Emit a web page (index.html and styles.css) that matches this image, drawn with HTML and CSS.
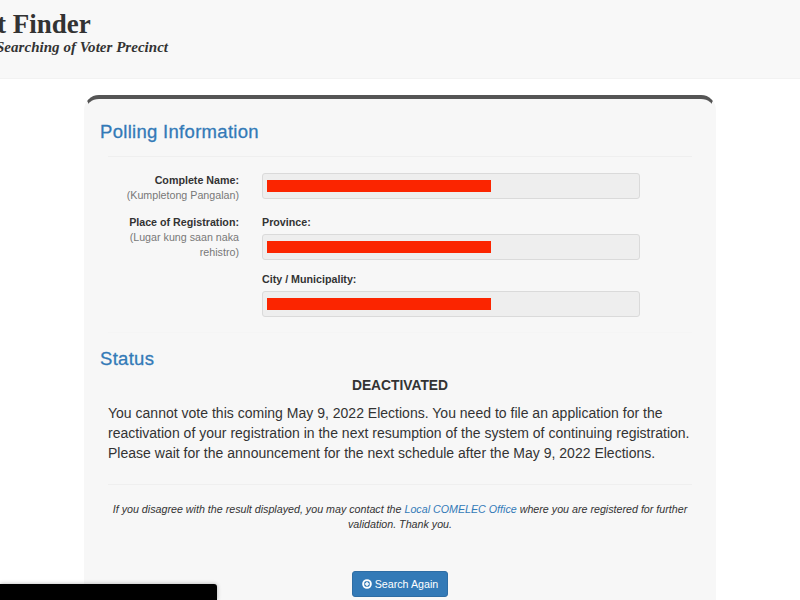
FILE: index.html
```html
<!DOCTYPE html>
<html lang="en">
<head>
    <meta charset="UTF-8">
    <meta name="viewport" content="width=device-width, initial-scale=1.0">
    <title>Precinct Finder</title>
    <link rel="stylesheet" href="styles.css">
</head>
<body>
    <header>
        <h1>t Finder</h1>
        <p class="tagline">Searching of Voter Precinct</p>
    </header>

    <div class="panel">
        <h2>Polling Information</h2>
        <hr>
        <div class="form-row">
            <div class="form-label">
                <b>Complete Name:</b>
                <span>(Kumpletong Pangalan)</span>
            </div>
            <div class="form-fields">
                <div class="field"><div class="redacted"></div></div>
            </div>
        </div>
        <div class="form-row">
            <div class="form-label">
                <b>Place of Registration:</b>
                <span>(Lugar kung saan naka rehistro)</span>
            </div>
            <div class="form-fields">
                <b>Province:</b>
                <div class="field"><div class="redacted"></div></div>
                <b>City / Municipality:</b>
                <div class="field"><div class="redacted"></div></div>
            </div>
        </div>
        <hr class="faint">

        <h2>Status</h2>
        <div class="status"><span>DEACTIVATED</span></div>
        <p class="message">
            <span>You cannot vote this coming May 9, 2022 Elections. You need to file an application for the</span><br>
            <span>reactivation of your registration in the next resumption of the system of continuing registration.</span><br>
            <span>Please wait for the announcement for the next schedule after the May 9, 2022 Elections.</span>
        </p>
        <hr>
        <p class="note">
            <span>If you disagree with the result displayed, you may contact the <a href="#">Local COMELEC Office</a> where you are registered for further</span><br>
            <span>validation. Thank you.</span>
        </p>
        <div class="actions">
            <a href="#" class="btn">
                <svg class="icon" viewBox="0 0 16 16">
                    <circle cx="8" cy="8" r="6.2" fill="none" stroke="#fff" stroke-width="3"/>
                    <path d="M8 4.5v7M4.5 8h7" stroke="#fff" stroke-width="2.4"/>
                </svg>
                <span>Search Again</span>
            </a>
        </div>
    </div>

    <div class="status-bar"></div>
</body>
</html>
```

FILE: styles.css
```css
* {
    box-sizing: border-box;
}
body {
    font-family: "Liberation Sans", Arial, sans-serif;
    margin: 0;
    background-color: #fff;
    color: #333;
    font-size: 10.7px;
    line-height: 15px;
}
header {
    height: 79px;
    padding-top: 9px;
    background-color: #f8f8f8;
    border-bottom: 1px solid #f2f2f2;
    font-family: "Liberation Serif", "Times New Roman", serif;
    white-space: nowrap;
}
h1 {
    margin: 0 0 0 -3px;
    font-size: 27px;
    line-height: 30px;
}
.tagline {
    margin: 0 0 0 -4px;
    font-size: 15px;
    line-height: 17px;
    letter-spacing: 0.03px;
    font-weight: bold;
    font-style: italic;
}
.panel {
    width: 632px;
    height: 505px;
    margin: 16px 0 0 84px;
    padding: 22px 14px 0;
    background-color: #f7f7f7;
    border: 2px solid #f7f7f7;
    border-top: 4px solid #555;
    border-bottom: 0;
    border-radius: 15px 15px 0 0;
}
h2 {
    margin: 0;
    color: #337ab7;
    font-size: 18.5px;
    line-height: 22px;
    letter-spacing: 0.3px;
    font-weight: normal;
    -webkit-text-stroke: 0.3px #337ab7;
}
hr {
    height: 1px;
    margin: 13px 8px 16px;
    border: 0;
    background-color: #efefef;
}
.form-row {
    display: flex;
    gap: 23px;
}
.form-row + .form-row {
    margin-top: 12px;
}
.form-label {
    width: 139px;
    text-align: right;
}
.form-label b,
.form-label span {
    display: block;
}
.form-label span {
    color: #777;
    padding-left: 25px;
}
.form-fields {
    width: 378px;
}
.form-fields b {
    display: block;
    margin-bottom: 4px;
}
.form-fields .field + b {
    margin-top: 12px;
}
.field {
    height: 26px;
    padding: 6px 4px;
    background-color: #eee;
    border: 1px solid #dadada;
    border-radius: 3px;
}
.redacted {
    width: 224px;
    height: 12px;
    background-color: #fb2500;
}
.faint {
    background-color: #f5f5f5;
    margin: 15px 8px 15px;
}
.status {
    margin-top: 6px;
    text-align: center;
    font-size: 13.8px;
    line-height: 20px;
    font-weight: bold;
}
.message {
    margin: 7px 8px 0;
    font-size: 14px;
    line-height: 20px;
    letter-spacing: 0.01px;
    white-space: nowrap;
}
.message + hr {
    margin: 21px 8px 17px;
}
.note {
    margin: 0;
    text-align: center;
    font-style: italic;
    white-space: nowrap;
}
.note a {
    color: #337ab7;
    text-decoration: none;
}
.actions {
    margin-top: 39px;
    text-align: center;
}
.btn {
    display: inline-flex;
    align-items: center;
    justify-content: center;
    gap: 3px;
    width: 96px;
    height: 26px;
    background-color: #337ab7;
    border: 1px solid #2e6da4;
    border-radius: 3px;
    color: #fff;
    text-decoration: none;
    white-space: nowrap;
}
.icon {
    width: 10px;
    height: 10px;
}
/* browser status bar over the bottom left corner */
.status-bar {
    position: absolute;
    left: 0;
    bottom: 0;
    width: 217px;
    height: 16px;
    background-color: #000;
    border-top-right-radius: 3px;
    box-shadow: 0 0 4px rgba(0, 0, 0, 0.3);
}
```
